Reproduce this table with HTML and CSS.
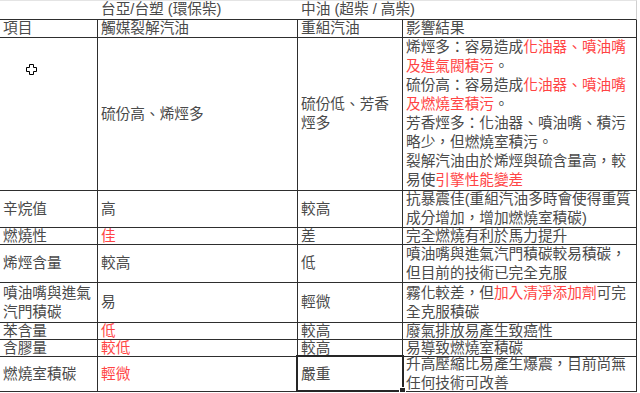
FILE: index.html
```html
<!DOCTYPE html>
<html lang="zh-Hant">
<head>
<meta charset="utf-8">
<link rel="stylesheet" href="styles.css">
</head>
<body>
<div class="sheet">
  <div class="c top"></div>
  <div class="c top">台亞/台塑 (環保柴)</div>
  <div class="c top">中油 (超柴 / 高柴)</div>
  <div class="c top last"></div>

  <div class="c">項目</div>
  <div class="c">觸媒裂解汽油</div>
  <div class="c">重組汽油</div>
  <div class="c">影響結果</div>

  <div class="c"></div>
  <div class="c">硫份高、烯烴多</div>
  <div class="c"><div>硫份低、芳香<br>烴多</div></div>
  <div class="c"><div>烯烴多：容易造成<span class="r">化油器、噴油嘴</span><br><span class="r">及進氣閥積污</span>。<br>硫份高：容易造成<span class="r">化油器、噴油嘴</span><br><span class="r">及燃燒室積污</span>。<br>芳香烴多：化油器、噴油嘴、積污<br>略少，但燃燒室積污。<br>裂解汽油由於烯烴與硫含量高，較<br>易使<span class="r">引擎性能變差</span></div></div>

  <div class="c">辛烷值</div>
  <div class="c">高</div>
  <div class="c">較高</div>
  <div class="c"><div>抗暴震佳(重組汽油多時會使得重質<br>成分增加，增加燃燒室積碳)</div></div>

  <div class="c">燃燒性</div>
  <div class="c r">佳</div>
  <div class="c">差</div>
  <div class="c">完全燃燒有利於馬力提升</div>

  <div class="c">烯烴含量</div>
  <div class="c">較高</div>
  <div class="c">低</div>
  <div class="c"><div>噴油嘴與進氣汽門積碳較易積碳，<br>但目前的技術已完全克服</div></div>

  <div class="c"><div>噴油嘴與進氣<br>汽門積碳</div></div>
  <div class="c">易</div>
  <div class="c">輕微</div>
  <div class="c"><div>霧化較差，但<span class="r">加入清淨添加劑</span>可完<br>全克服積碳</div></div>

  <div class="c">苯含量</div>
  <div class="c r">低</div>
  <div class="c">較高</div>
  <div class="c">廢氣排放易產生致癌性</div>

  <div class="c">含膠量</div>
  <div class="c r">較低</div>
  <div class="c">較高</div>
  <div class="c">易導致燃燒室積碳</div>

  <div class="c">燃燒室積碳</div>
  <div class="c r">輕微</div>
  <div class="c">嚴重</div>
  <div class="c"><div>升高壓縮比易產生爆震，目前尚無<br>任何技術可改善</div></div>

  <div class="sel"><div class="handle"></div></div>
  <svg class="cursor" width="11" height="11" viewBox="0 0 11 11"><path d="M3.5 0.5h4v3h3v4h-3v3h-4v-3h-3v-4h3z" fill="#fff" stroke="#000" stroke-width="1"/></svg>
</div>
</body>
</html>
```
FILE: styles.css
```css
html, body {
  margin: 0;
  padding: 0;
  background: #fff;
}
.sheet {
  position: relative;
  display: grid;
  grid-template-columns: 98px 200px 105px 234px;
  grid-template-rows: 20px 18px 153px 37px 17px 38px 40px 17px 17px 35px;
  font-family: "Liberation Sans", "Noto Sans CJK TC", sans-serif;
  font-size: 14.67px;
  line-height: 19px;
  color: #4a4a4a;
}
.c {
  box-sizing: border-box;
  border-right: 1px solid #2e2e2e;
  border-bottom: 1px solid #2e2e2e;
  padding: 0 2px 0 3px;
  display: flex;
  align-items: center;
  white-space: nowrap;
  overflow: visible;
}
.c.top {
  border-right: none;
  border-top: 1px solid #e4e4e4;
  align-items: flex-end;
}
.c.top.last {
  border-right: 1px solid #d0d0d0;
}
.r {
  color: #ff4444;
}
.c.r {
  color: #ff4444;
}
.sel {
  position: absolute;
  left: 296px;
  top: 355px;
  width: 108px;
  height: 37px;
  box-sizing: border-box;
  border: 2px solid #262626;
}
.handle {
  position: absolute;
  right: -4px;
  bottom: -4px;
  width: 5px;
  height: 5px;
  background: #262626;
  border: 1px solid #fff;
}
.cursor {
  position: absolute;
  left: 26px;
  top: 64px;
}
```
